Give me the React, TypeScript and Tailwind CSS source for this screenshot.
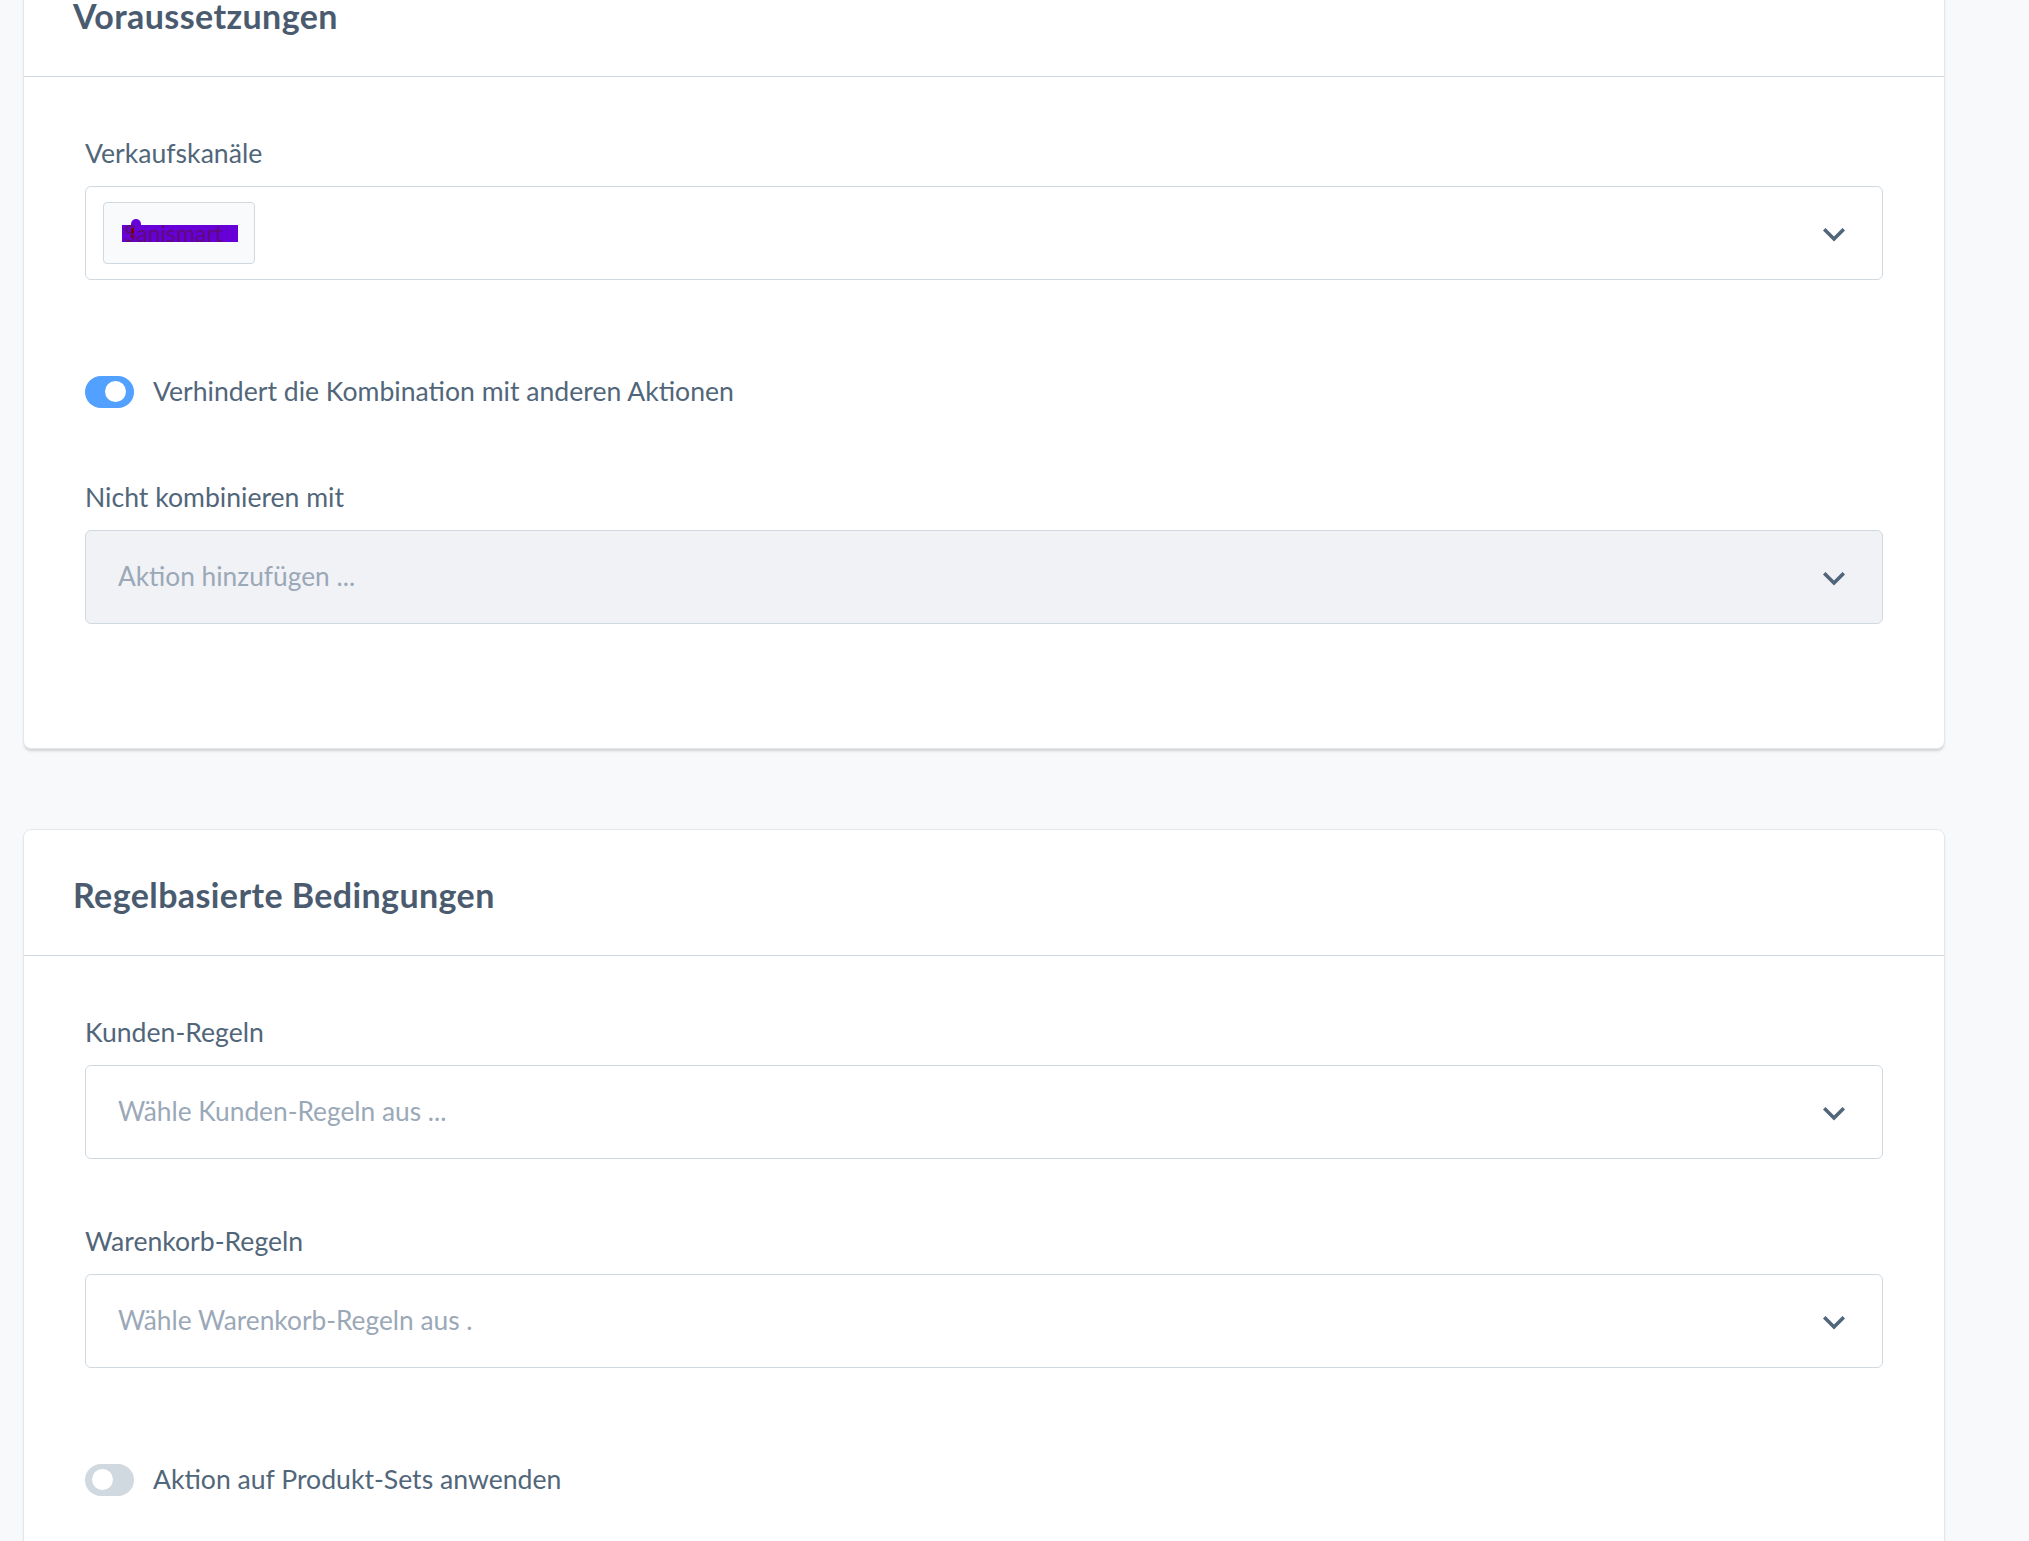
import type { ReactNode } from "react";

function Chevron() {
    return (
        <svg width="22" height="14" viewBox="0 0 22 14" fill="none" className="shrink-0 mt-[3px]">
            <path d="M2.5 2.5l8.5 8.5 8.5-8.5" stroke="#52667a" strokeWidth="3.6" strokeLinecap="square" />
        </svg>
    );
}

function Label({ children }: { children: ReactNode }) {
    return <div className="text-[26.6px] leading-[34px] text-[#52667a] mb-[16px]">{children}</div>;
}

function Select({
    children,
    disabled = false,
    padLeft = "pl-[32px]",
}: {
    children: ReactNode;
    disabled?: boolean;
    padLeft?: string;
}) {
    return (
        <div
            className={`h-[94px] flex items-center justify-between pr-[37px] border border-[#d1d9e0] rounded-[6px] ${padLeft} ${
                disabled ? "bg-[#f0f2f5]" : "bg-white"
            }`}
        >
            <div className="flex items-center">{children}</div>
            <Chevron />
        </div>
    );
}

function Placeholder({ children }: { children: ReactNode }) {
    return <span className="text-[26.3px] text-[#9aa8b8]">{children}</span>;
}

function Toggle({ on, label }: { on: boolean; label: string }) {
    return (
        <div className="flex items-center gap-[19px] h-[33px]">
            <div
                className={`relative w-[49px] h-[32px] rounded-full ${on ? "bg-[#52a0ff]" : "bg-[#d1d9e0]"}`}
            >
                <div
                    className={`absolute top-[5.5px] w-[21px] h-[21px] rounded-full bg-white ${
                        on ? "right-[8px]" : "left-[7px]"
                    }`}
                />
            </div>
            <span className="text-[26.6px] text-[#52667a]">{label}</span>
        </div>
    );
}

function Card({ title, children, className = "" }: { title: string; children: ReactNode; className?: string }) {
    return (
        <div
            className={`bg-white border border-[#e3e7ec] rounded-[8px] shadow-[0_3px_3px_-1px_rgba(0,0,0,0.16)] ${className}`}
        >
            <div className="h-[126px] flex items-center pl-[49px] pt-[3px] border-b border-[#d1d9e0]">
                <h2 className="text-[34px] tracking-[0.4px] font-bold text-[#4b5b6f]">{title}</h2>
            </div>
            {children}
        </div>
    );
}

export default function App() {
    return (
        <div className="min-h-screen bg-[#f8f9fa] overflow-hidden font-['Lato','Noto_Sans',sans-serif]">
            <div className="ml-[23px] w-[1922px] -mt-[50px] flex flex-col gap-[80px]">
                {/* Voraussetzungen */}
                <Card title="Voraussetzungen">
                    <div className="px-[61px] pt-[59px] pb-[124px]">
                        <Label>Verkaufskanäle</Label>
                        <Select padLeft="pl-[17px]">
                            <div className="relative w-[152px] h-[62px] flex items-center pl-[20px] bg-[#f9fafc] border border-[#d1d9e0] rounded-[4px]">
                                <span className="absolute left-[18px] top-[22px] w-[116px] h-[17px] bg-[#6600d6]" />
                                <span className="absolute left-[27px] top-[16px] w-[10px] h-[6px] rounded-t-full bg-[#6600d6]" />
                                <span className="absolute left-[27px] top-[25px] w-[3px] h-[10px] bg-[#7a0000]" />
                                <span className="relative text-[23px] leading-none text-[#5e0a7a]">Sanismart</span>
                            </div>
                        </Select>

                        <div className="mt-[95px]">
                            <Toggle on label="Verhindert die Kombination mit anderen Aktionen" />
                        </div>

                        <div className="mt-[72px]">
                            <Label>Nicht kombinieren mit</Label>
                            <Select disabled>
                                <Placeholder>Aktion hinzufügen ...</Placeholder>
                            </Select>
                        </div>
                    </div>
                </Card>

                {/* Regelbasierte Bedingungen */}
                <Card title="Regelbasierte Bedingungen">
                    <div className="px-[61px] pt-[59px] pb-[200px]">
                        <Label>Kunden-Regeln</Label>
                        <Select>
                            <Placeholder>Wähle Kunden-Regeln aus ...</Placeholder>
                        </Select>

                        <div className="mt-[65px]">
                            <Label>Warenkorb-Regeln</Label>
                            <Select>
                                <Placeholder>Wähle Warenkorb-Regeln aus .</Placeholder>
                            </Select>
                        </div>

                        <div className="mt-[95px]">
                            <Toggle on={false} label="Aktion auf Produkt-Sets anwenden" />
                        </div>
                    </div>
                </Card>
            </div>
        </div>
    );
}
